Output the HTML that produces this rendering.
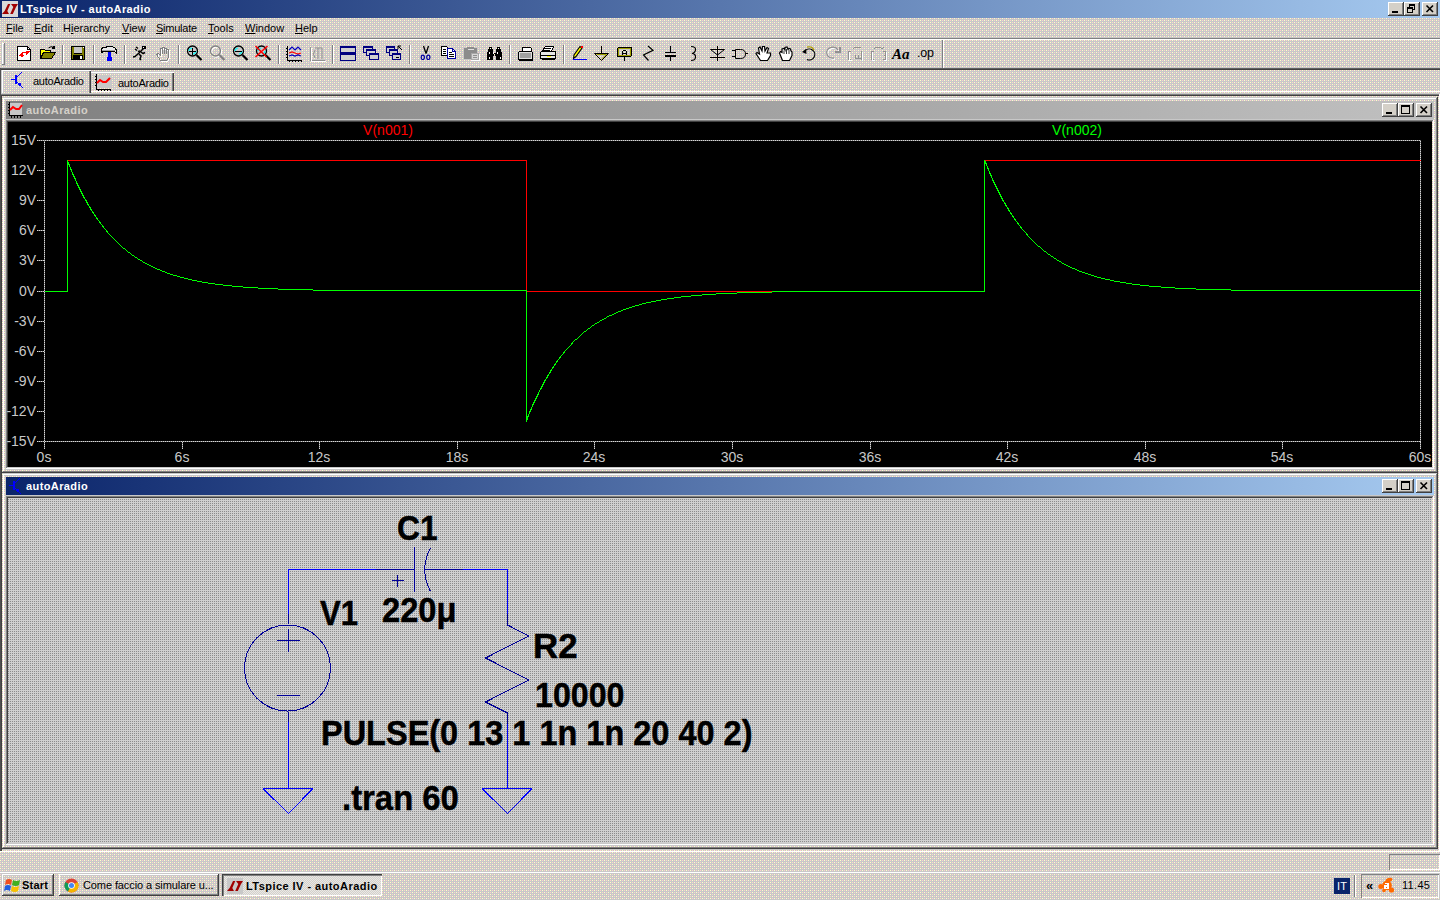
<!DOCTYPE html>
<html><head><meta charset="utf-8">
<style>
*{margin:0;padding:0;box-sizing:border-box}
html,body{width:1440px;height:900px;overflow:hidden;font-family:"Liberation Sans",sans-serif;font-size:11px;color:#000}
body{position:relative;background-color:#d4d0c8;
background-image:conic-gradient(from 270deg at 1px 1px,#ffffc8 25%,transparent 0),conic-gradient(from 270deg at 1px 1px,#ffd0d0 25%,transparent 0),conic-gradient(from 270deg at 1px 1px,#ffd0d0 25%,transparent 0),conic-gradient(from 270deg at 1px 1px,#ffffc8 25%,transparent 0),linear-gradient(#c8c8c8,#c8c8c8);
background-size:4px 4px;background-position:0 0,2px 0,0 2px,2px 2px,0 0}
.a{position:absolute}
.hl{position:absolute;height:1px}
.vl{position:absolute;width:1px}
.raised{box-shadow:inset -1px -1px #404040,inset 1px 1px #fff,inset -2px -2px #808080}
.sunk{box-shadow:inset 1px 1px #808080,inset -1px -1px #fff}
.cap .t{position:absolute;left:20px;top:3px;font-weight:bold;font-size:11px;white-space:nowrap;letter-spacing:0.4px}
.cb{position:absolute;width:16px;height:14px;background:#d4d0c8;box-shadow:inset -1px -1px #404040,inset 1px 1px #fff,inset -2px -2px #808080}
.cb svg{position:absolute;left:0;top:0}
</style></head><body>

<!-- CHROME -->
<!-- title bar -->
<div class="a" style="left:0;top:0;width:1440px;height:18px;background:linear-gradient(90deg,#0a246a,#a6caf0)"></div>
<svg class="a" style="left:2px;top:1px" width="16" height="16" shape-rendering="crispEdges">
<rect x="0" y="0" width="16" height="16" fill="#d8d8d8"/>
<path fill="#a00000" shape-rendering="auto" d="M6,3 H8.3 L5.3,10 L7,13 H0 L2.6,10 Z M9,3 H16 L14,6 L10.8,13 H8.2 L11.3,6 Z"/>
</svg>
<div class="a" style="left:20px;top:3px;color:#fff;font-weight:bold;font-size:11px;white-space:nowrap;letter-spacing:0.42px">LTspice IV - autoAradio</div>
<div class="cb" style="left:1388px;top:2px"><svg width="16" height="14" shape-rendering="crispEdges"><rect x="4" y="9" width="6" height="2" fill="#000"/></svg></div>
<div class="cb" style="left:1404px;top:2px"><svg width="16" height="14" shape-rendering="crispEdges"><path fill="none" stroke="#000" d="M5.5,2.5 h5 v5 h-5 z"/><rect x="5" y="2" width="6" height="2"/><rect x="3" y="5" width="6" height="6" fill="#d4d0c8"/><path fill="none" stroke="#000" d="M3.5,5.5 h5 v5 h-5 z"/><rect x="3" y="5" width="6" height="2"/></svg></div>
<div class="cb" style="left:1422px;top:2px"><svg width="16" height="14"><path stroke="#000" stroke-width="1.6" d="M4.5,3.5 L11,10 M11,3.5 L4.5,10"/></svg></div>

<!-- menu -->
<div class="a" style="left:0;top:18px;width:1440px;height:20px;font-size:11px">
  <div class="a" style="left:6px;top:4px"><u>F</u>ile</div>
  <div class="a" style="left:34px;top:4px"><u>E</u>dit</div>
  <div class="a" style="left:63px;top:4px">H<u>i</u>erarchy</div>
  <div class="a" style="left:122px;top:4px"><u>V</u>iew</div>
  <div class="a" style="left:156px;top:4px;letter-spacing:-0.25px"><u>S</u>imulate</div>
  <div class="a" style="left:208px;top:4px"><u>T</u>ools</div>
  <div class="a" style="left:245px;top:4px"><u>W</u>indow</div>
  <div class="a" style="left:295px;top:4px"><u>H</u>elp</div>
</div>
<div class="hl" style="left:0;top:38px;width:1440px;background:#808080"></div>
<div class="hl" style="left:0;top:39px;width:1440px;background:#fff"></div>

<!-- toolbar band -->
<div class="vl" style="left:2px;top:43px;height:21px;background:#fff"></div>
<div class="vl" style="left:3px;top:43px;height:1px;background:#fff"></div>
<div class="vl" style="left:4px;top:43px;height:21px;background:#808080"></div>
<div class="hl" style="left:2px;top:64px;width:3px;background:#808080"></div>
<div class="vl" style="left:942px;top:40px;height:28px;background:#808080"></div>
<div class="vl" style="left:943px;top:40px;height:28px;background:#fff"></div>
<div class="hl" style="left:0;top:68px;width:1440px;background:#606060"></div><div class="hl" style="left:0;top:69px;width:1440px;background:#404040"></div>

<!-- tab bar -->

<div class="a" style="left:2px;top:70px;width:89px;height:23px;box-shadow:inset 1px 1px #fff,inset -1px 0 #404040,inset -2px 0 #808080"></div>
<div class="a" style="left:91px;top:72px;width:83px;height:20px;box-shadow:inset 0 1px #fff,inset -1px 0 #404040,inset -2px 0 #808080"></div>
<div class="hl" style="left:91px;top:91px;width:1349px;background:#fff"></div>
<svg class="a" style="left:9px;top:72px" width="16" height="16"><g fill="#0000ff"><rect x="6" y="3" width="2" height="9"/><rect x="2" y="7" width="4" height="1"/><rect x="8" y="4" width="1" height="1"/><rect x="9" y="3" width="1" height="1"/><rect x="10" y="2" width="1" height="1"/><rect x="11" y="1" width="1" height="1"/><rect x="12" y="0" width="1" height="1"/><rect x="8" y="10" width="1" height="1"/><rect x="9" y="11" width="1" height="1"/><rect x="10" y="12" width="1" height="1"/><rect x="11" y="13" width="1" height="1"/><rect x="12" y="14" width="1" height="1"/><rect x="13" y="15" width="1" height="1"/><rect x="10" y="11" width="2" height="3"/><rect x="9" y="12" width="3" height="1"/></g></svg>
<div class="a" style="left:33px;top:75px;font-size:11px;letter-spacing:-0.25px">autoAradio</div>
<svg class="a" style="left:95px;top:74px" width="17" height="17" shape-rendering="crispEdges">
<rect x="2" y="1" width="14" height="13" fill="#c8c8c8"/>
<path stroke="#000" fill="none" d="M1.5,0 V15.5 H16 M0,2.5 h1 M0,5.5 h1 M0,8.5 h1 M0,11.5 h1 M3.5,16 v1 M6.5,16 v1 M9.5,16 v1 M12.5,16 v1 M15.5,16 v1"/>
<path stroke="#ff0000" fill="none" stroke-width="2" shape-rendering="auto" d="M2,9 L5,6 L8,8 L11,8 L15,4"/>
</svg>
<div class="a" style="left:118px;top:77px;font-size:11px;letter-spacing:-0.25px">autoAradio</div>

<!-- MDI client edges -->
<div class="hl" style="left:0;top:94px;width:1440px;background:#808080"></div>
<div class="hl" style="left:1px;top:95px;width:1438px;background:#404040"></div>
<div class="vl" style="left:0;top:68px;height:784px;background:#505050"></div>
<div class="vl" style="left:1px;top:95px;height:756px;background:#404040"></div>
<div class="vl" style="left:1439px;top:94px;height:758px;background:#fff"></div>
<div class="hl" style="left:0;top:851px;width:1440px;background:#fff"></div>

<!-- plot window -->
<div class="a" style="left:2px;top:472px;width:1436px;height:1px;background:#404040"></div>
<div class="a" style="left:1437px;top:97px;width:1px;height:376px;background:#404040"></div>
<div class="a" style="left:3px;top:98px;width:1433px;height:1px;background:#fff"></div>
<div class="a" style="left:3px;top:98px;width:1px;height:373px;background:#fff"></div>
<div class="a" style="left:3px;top:471px;width:1434px;height:1px;background:#808080"></div>
<div class="a" style="left:1436px;top:98px;width:1px;height:374px;background:#808080"></div>
<div class="a cap" style="left:6px;top:101px;width:1428px;height:18px;background:linear-gradient(90deg,#808080,#c0c0c0)">
  <div class="t" style="color:#d4d0c8">autoAradio</div>
</div>
<svg class="a" style="left:7px;top:102px" width="16" height="16" shape-rendering="crispEdges">
<rect x="3" y="1" width="12" height="12" fill="#c8c8c8"/>
<path stroke="#000" fill="none" d="M2.5,0 V13.5 H16 M1,2.5 h1 M1,5.5 h1 M1,8.5 h1 M1,11.5 h1 M4.5,14 v2 M7.5,14 v2 M10.5,14 v2 M13.5,14 v2"/>
<path stroke="#ff0000" fill="none" stroke-width="2" shape-rendering="auto" d="M3,8 L6,5 L9,7 L12,7 L15,3"/>
</svg>
<div class="cb" style="left:1382px;top:103px"><svg width="16" height="14" shape-rendering="crispEdges"><rect x="4" y="9" width="6" height="2" fill="#000"/></svg></div>
<div class="cb" style="left:1398px;top:103px"><svg width="16" height="14" shape-rendering="crispEdges"><path fill="none" stroke="#000" d="M3.5,2.5 h8 v8 h-8 z"/><rect x="3" y="3" width="9" height="1"/></svg></div>
<div class="cb" style="left:1416px;top:103px"><svg width="16" height="14"><path stroke="#000" stroke-width="1.6" d="M4.5,3.5 L11,10 M11,3.5 L4.5,10"/></svg></div>
<div class="a" style="left:6px;top:120px;width:1427px;height:1px;background:#808080"></div>
<div class="a" style="left:6px;top:120px;width:1px;height:348px;background:#808080"></div>
<div class="a" style="left:6px;top:468px;width:1428px;height:1px;background:#fff"></div>
<div class="a" style="left:1433px;top:120px;width:1px;height:349px;background:#fff"></div>
<div class="a" style="left:7px;top:121px;width:1425px;height:1px;background:#404040"></div>
<div class="a" style="left:7px;top:121px;width:1px;height:346px;background:#404040"></div>
<div class="a" style="left:8px;top:122px;width:1424px;height:345px;background:#000"></div>

<!-- schematic window -->
<div class="a" style="left:2px;top:848px;width:1436px;height:1px;background:#404040"></div>
<div class="a" style="left:1437px;top:473px;width:1px;height:376px;background:#404040"></div>
<div class="a" style="left:3px;top:474px;width:1433px;height:1px;background:#fff"></div>
<div class="a" style="left:3px;top:474px;width:1px;height:373px;background:#fff"></div>
<div class="a" style="left:3px;top:847px;width:1434px;height:1px;background:#808080"></div>
<div class="a" style="left:1436px;top:474px;width:1px;height:374px;background:#808080"></div>
<div class="a cap" style="left:6px;top:477px;width:1428px;height:18px;background:linear-gradient(90deg,#0a246a,#a6caf0)">
  <div class="t" style="color:#fff">autoAradio</div>
</div>
<svg class="a" style="left:7px;top:478px" width="16" height="16"><g fill="#0000ff"><rect x="6" y="3" width="2" height="9"/><rect x="2" y="7" width="4" height="1"/><rect x="8" y="4" width="1" height="1"/><rect x="9" y="3" width="1" height="1"/><rect x="10" y="2" width="1" height="1"/><rect x="11" y="1" width="1" height="1"/><rect x="12" y="0" width="1" height="1"/><rect x="8" y="10" width="1" height="1"/><rect x="9" y="11" width="1" height="1"/><rect x="10" y="12" width="1" height="1"/><rect x="11" y="13" width="1" height="1"/><rect x="12" y="14" width="1" height="1"/><rect x="13" y="15" width="1" height="1"/><rect x="10" y="11" width="2" height="3"/><rect x="9" y="12" width="3" height="1"/></g></svg>
<div class="cb" style="left:1382px;top:479px"><svg width="16" height="14" shape-rendering="crispEdges"><rect x="4" y="9" width="6" height="2" fill="#000"/></svg></div>
<div class="cb" style="left:1398px;top:479px"><svg width="16" height="14" shape-rendering="crispEdges"><path fill="none" stroke="#000" d="M3.5,2.5 h8 v8 h-8 z"/><rect x="3" y="3" width="9" height="1"/></svg></div>
<div class="cb" style="left:1416px;top:479px"><svg width="16" height="14"><path stroke="#000" stroke-width="1.6" d="M4.5,3.5 L11,10 M11,3.5 L4.5,10"/></svg></div>
<div class="a" style="left:6px;top:496px;width:1427px;height:1px;background:#808080"></div>
<div class="a" style="left:6px;top:496px;width:1px;height:348px;background:#808080"></div>
<div class="a" style="left:6px;top:844px;width:1428px;height:1px;background:#fff"></div>
<div class="a" style="left:1433px;top:496px;width:1px;height:349px;background:#fff"></div>
<div class="a" style="left:7px;top:497px;width:1425px;height:1px;background:#404040"></div>
<div class="a" style="left:7px;top:497px;width:1px;height:346px;background:#404040"></div>
<div class="a" style="left:8px;top:498px;width:1424px;height:345px;background-color:#d0d0d0;background-image:linear-gradient(#d0d0d0 1px,transparent 1px),linear-gradient(90deg,#8c8c8c 1px,#d0d0d0 1px);background-size:2px 2px;background-position:0 0"></div>

<!-- status bar -->
<div class="a" style="left:1389px;top:854px;width:51px;height:16px;box-shadow:inset 1px 1px #808080,inset -1px -1px #fff"></div>
<div class="hl" style="left:0;top:872px;width:1440px;background:#fff"></div>

<!-- /CHROME -->

<!-- TOOLBAR -->
<svg class="a" style="left:0;top:0" width="960" height="70" shape-rendering="crispEdges">
<rect x="62" y="45" width="1" height="19" fill="#808080"/><rect x="63" y="45" width="1" height="19" fill="#fff"/>
<rect x="93" y="45" width="1" height="19" fill="#808080"/><rect x="94" y="45" width="1" height="19" fill="#fff"/>
<rect x="124" y="45" width="1" height="19" fill="#808080"/><rect x="125" y="45" width="1" height="19" fill="#fff"/>
<rect x="178" y="45" width="1" height="19" fill="#808080"/><rect x="179" y="45" width="1" height="19" fill="#fff"/>
<rect x="278" y="45" width="1" height="19" fill="#808080"/><rect x="279" y="45" width="1" height="19" fill="#fff"/>
<rect x="332" y="45" width="1" height="19" fill="#808080"/><rect x="333" y="45" width="1" height="19" fill="#fff"/>
<rect x="409" y="45" width="1" height="19" fill="#808080"/><rect x="410" y="45" width="1" height="19" fill="#fff"/>
<rect x="509" y="45" width="1" height="19" fill="#808080"/><rect x="510" y="45" width="1" height="19" fill="#fff"/>
<rect x="563" y="45" width="1" height="19" fill="#808080"/><rect x="564" y="45" width="1" height="19" fill="#fff"/>
<path d="M17.5,46.5 H27.5 L30.5,49.5 V60.5 H17.5 Z" fill="#fff" stroke="#000"/>
<path d="M27.5,46.5 V49.5 H30.5" fill="none" stroke="#000"/>
<path fill="#f00" d="M19,56 L22,52 L30,51 L27,55 Z M21,57 L23,54 L25,54 L23,57 Z"/><path fill="#fff" d="M23,53 h3 v2 h-3z"/>
<path d="M40.5,49.5 H44.5 L45.5,50.5 H50.5 V52.5 H55.5 L51.5,58.5 H40.5 Z" fill="#ffff00" stroke="#000"/>
<path d="M43.5,52.5 H55.5 L51.5,58.5 H40.5 Z" fill="#808000" stroke="#000"/>
<path d="M48.5,48 Q51,45.5 54,47.5" fill="none" stroke="#000" shape-rendering="auto"/><path d="M53,46 h2 v3 h-3z" fill="#000"/>
<rect x="71" y="46" width="14" height="14" fill="#000"/><rect x="72" y="47" width="12" height="12" fill="#808000"/>
<rect x="74" y="47" width="8" height="6" fill="#c8c8c8"/><rect x="74" y="53" width="8" height="1" fill="#000"/><rect x="73" y="55" width="10" height="5" fill="#000"/><rect x="80" y="56" width="2" height="3" fill="#fff"/><rect x="83" y="47" width="1" height="1" fill="#fff"/>
<path d="M101.5,48.5 L103.5,47.5 H105.5 L107.5,46.5 H112.5 L115.5,48.5 L116.5,50.5 V53.5 L114.5,51.5 H103.5 L101.5,52.5 Z" fill="#e8e8e8" stroke="#000"/>
<rect x="102" y="50" width="13" height="1" fill="#a0a0a0"/>
<rect x="108" y="52" width="3" height="5" fill="#0000ff"/><rect x="107" y="57" width="5" height="4" fill="#0000ff"/>
<g fill="none" stroke="#000" stroke-width="1.5" shape-rendering="auto">
<path d="M133,57 L135,56.5 L139,53 L142,50 L144,48"/><path d="M138,51.5 L140,51 M141,52 L143,53.5 L145,52.5 M139,54 L141,56 L140,59 L141,60"/><path d="M135,49 L137,50.5 M136,47 L138,48.5"/>
</g><rect x="142" y="46" width="4" height="3" fill="#000"/><rect x="143" y="47" width="1" height="1" fill="#fff"/>
<path d="M160.5,60.5 L156.5,54.5 L158.5,53.5 L160.5,55.5 V48.5 H162.5 V47.5 H164.5 V48.5 H166.5 V49.5 H168.5 V57.5 L166.5,60.5 Z" fill="none" stroke="#fff" transform="translate(1,1)"/>
<path d="M160.5,60.5 L156.5,54.5 L158.5,53.5 L160.5,55.5 V48.5 H162.5 V47.5 H164.5 V48.5 H166.5 V49.5 H168.5 V57.5 L166.5,60.5 Z" fill="none" stroke="#808080"/>
<path d="M162.5,49 V54 M164.5,48 V54 M166.5,50 V54" stroke="#808080"/>
<g shape-rendering="auto">
<circle cx="192.5" cy="51" r="5" fill="#c8c8c8" stroke="#000" stroke-width="1.3"/>
<path d="M192.0,48 A3.5,3.5 0 0 0 189.0,51" stroke="#00ffff" stroke-width="1.2" fill="none"/>
<path d="M193.0,54 A3.5,3.5 0 0 0 196.0,51" stroke="#00ffff" stroke-width="1.2" fill="none"/>
<path d="M196.5,55 L201.5,60" stroke="#000" stroke-width="2.2" fill="none"/>
</g>
<rect x="189" y="50.5" width="7" height="1.2" fill="#000"/>
<rect x="191.9" y="47.5" width="1.2" height="7" fill="#000"/>
<g shape-rendering="auto">
<circle cx="216.5" cy="52" r="5" fill="none" stroke="#fff" stroke-width="1.3"/>
<circle cx="215.5" cy="51" r="5" fill="none" stroke="#808080" stroke-width="1.3"/>
<path d="M219.5,55 L224.5,60" stroke="#808080" stroke-width="2.2" fill="none"/>
</g>
<g shape-rendering="auto">
<circle cx="238.5" cy="51" r="5" fill="#c8c8c8" stroke="#000" stroke-width="1.3"/>
<path d="M238.0,48 A3.5,3.5 0 0 0 235.0,51" stroke="#00ffff" stroke-width="1.2" fill="none"/>
<path d="M239.0,54 A3.5,3.5 0 0 0 242.0,51" stroke="#00ffff" stroke-width="1.2" fill="none"/>
<path d="M242.5,55 L247.5,60" stroke="#000" stroke-width="2.2" fill="none"/>
</g>
<rect x="235" y="50.5" width="7" height="1.2" fill="#000"/>
<g shape-rendering="auto">
<circle cx="261.5" cy="51" r="5" fill="#c8c8c8" stroke="#000" stroke-width="1.3"/>
<path d="M261.0,48 A3.5,3.5 0 0 0 258.0,51" stroke="#00ffff" stroke-width="1.2" fill="none"/>
<path d="M262.0,54 A3.5,3.5 0 0 0 265.0,51" stroke="#00ffff" stroke-width="1.2" fill="none"/>
<path d="M265.5,55 L270.5,60" stroke="#000" stroke-width="2.2" fill="none"/>
</g>
<path d="M255.5,46 L266.5,57 M267.5,46 L255.5,57" stroke="#f00" stroke-width="1.5" shape-rendering="auto"/>
<path d="M287.5,46 V60.5 H302 M286,48.5 h1 M286,51.5 h1 M286,54.5 h1 M286,57.5 h1 M289.5,61 v1 M292.5,61 v1 M295.5,61 v1 M298.5,61 v1 M301.5,61 v1" stroke="#000" fill="none"/>
<g shape-rendering="auto" fill="none" stroke-width="1.2"><path d="M289,50 L292,47 L295,50 L298,47 L301,50" stroke="#0000c0"/><path d="M289,53 L292,52 L295,53 L298,54 L301,53" stroke="#f00"/><path d="M289,56 L292,55 L295,56 L298,55 L301,56" stroke="#0000c0"/></g>
<g stroke="#909090" fill="none"><path d="M310.5,47 V60.5 H325"/><path d="M315,50 Q312,54 315,58 M318,48 V59 M322,48 V59 M315,48 H322" shape-rendering="auto"/></g>
<g stroke="#fff" fill="none" transform="translate(1,1)"><path d="M310.5,47 V60.5 H325"/></g>
<rect x="340.5" y="46.5" width="15" height="6" fill="#d0d0d0" stroke="#000080"/><rect x="340" y="46" width="16" height="2" fill="#000080"/>
<rect x="340.5" y="53.5" width="15" height="7" fill="#d0d0d0" stroke="#000080"/><rect x="340" y="53" width="16" height="2" fill="#000080"/>
<rect x="363.5" y="46.5" width="9" height="6" fill="#d0d0d0" stroke="#000080"/><rect x="363" y="46" width="10" height="2" fill="#000080"/>
<rect x="366.5" y="49.5" width="9" height="6" fill="#d0d0d0" stroke="#000080"/><rect x="366" y="49" width="10" height="2" fill="#000080"/>
<rect x="369.5" y="53.5" width="9" height="6" fill="#d0d0d0" stroke="#000080"/><rect x="369" y="53" width="10" height="2" fill="#000080"/>
<rect x="386.5" y="46.5" width="8" height="6" fill="#d0d0d0" stroke="#000080"/><rect x="386" y="46" width="9" height="2" fill="#000080"/>
<rect x="389.5" y="49.5" width="8" height="6" fill="#d0d0d0" stroke="#000080"/><rect x="389" y="49" width="9" height="2" fill="#000080"/>
<rect x="392.5" y="53.5" width="8" height="6" fill="#d0d0d0" stroke="#000080"/><rect x="392" y="53" width="9" height="2" fill="#000080"/>
<path d="M396,57.5 h3" stroke="#000"/><path d="M398,46 h3 M398,46 v3 M398,46 L402,50" stroke="#000" shape-rendering="auto"/>
<g shape-rendering="auto" fill="none"><path d="M423.5,46 L426,53.5 M428.5,46 L426,53.5" stroke="#000" stroke-width="1.3"/><ellipse cx="422.8" cy="57.3" rx="1.6" ry="2.2" stroke="#0000a0" stroke-width="1.2"/><ellipse cx="428.3" cy="57.3" rx="1.6" ry="2.2" stroke="#0000a0" stroke-width="1.2"/></g>
<path d="M441.5,46.5 H446.5 L448.5,48.5 V55.5 H441.5 Z" fill="#fff" stroke="#000"/><path d="M443,49.5 h3 M443,51.5 h3 M443,53.5 h3" stroke="#000"/>
<path d="M447.5,48.5 H452.5 L455.5,51.5 V58.5 H447.5 Z" fill="#fff" stroke="#0000a0"/><path d="M449,52.5 h3 M449,54.5 h5 M449,56.5 h5" stroke="#000"/><path d="M452.5,48.5 V51.5 H455.5" fill="none" stroke="#0000a0"/>
<path d="M464,48 h3 v-1 h7 v1 h3 v11 h-13z" fill="#8c8c8c"/><rect x="468" y="49" width="6" height="1" fill="#e0e0e0"/><rect x="471" y="54" width="9" height="7" fill="#fff"/><rect x="471" y="53" width="8" height="7" fill="#a8a8a8"/><rect x="472" y="54" width="6" height="5" fill="#d8d8d8"/><path d="M473,55.5 h4 M473,57.5 h4" stroke="#909090"/>
<path fill="#000" d="M489,47 h3 v2 h1 v4 h3 v-4 h1 v-2 h3 v2 h1 v3 h1 v8 h-6 v-4 h-1 v-2 h-1 v2 h-1 v4 h-6 v-8 h1 v-3 h1z"/><path fill="#fff" d="M490,48 h1 v1 h-1z M498,48 h1 v1 h-1z M489,52 h1 v2 h-1z M493,52 h1 v2 h-1z M497,52 h1 v2 h-1z M489,57 h1 v2 h-1z M500,57 h1 v2 h-1z"/>
<path d="M522.5,47.5 H530.5 L531.5,48.5 V51 H522.5 Z" fill="#fff" stroke="#000"/><path d="M519.5,51.5 H531.5 L532.5,52.5 V59.5 H518.5 V52.5 Z" fill="#e0e0e0" stroke="#000"/><rect x="520" y="53" width="11" height="5" fill="#a0a0a0"/><rect x="519" y="60" width="14" height="1" fill="#000"/>
<path d="M544.5,47.5 L545.5,46.5 H553.5 L551.5,51.5 H542.5 Z" fill="#fff" stroke="#000"/><path d="M545,48.5 h6 M544,50.5 h6" stroke="#000"/><path d="M541.5,51.5 H555.5 V58.5 H540.5 V52.5 Z" fill="#e8e8e8" stroke="#000"/><rect x="541" y="55" width="14" height="1" fill="#000"/><rect x="547" y="56" width="4" height="1" fill="#ffff00"/><rect x="542" y="59" width="13" height="1" fill="#000"/>
<path d="M573.5,58.5 L574,55 L580,46.5 L582,48 L576,56.5 Z" fill="#ffff00" stroke="#000" stroke-width="1.1" shape-rendering="auto"/><rect x="581" y="46" width="1.5" height="2" fill="#f00"/><rect x="573" y="59" width="14" height="1" fill="#0000ff"/>
<path d="M601.5,46 V53" stroke="#000"/><path d="M594.5,53.5 H608.5 L601.5,60.5 Z" fill="none" stroke="#000" shape-rendering="auto"/><path d="M596.5,54.5 H606.5 L601.5,59" fill="none" stroke="#a0a000" shape-rendering="auto"/>
<rect x="617.5" y="47.5" width="14" height="9" rx="1.5" fill="none" stroke="#000"/><rect x="618.5" y="48.5" width="12" height="7" fill="none" stroke="#a0a000"/><path d="M624.5,57 V61" stroke="#000"/><path d="M622.5,55 V51.5 L623.5,50.5 H625.5 L626.5,51.5 V55 M622.5,53.5 H626.5" fill="none" stroke="#000"/>
<path d="M648,46 L653,50.3 L643.5,55 L648.5,60.5" fill="none" stroke="#000" stroke-width="1.2" shape-rendering="auto"/>
<path d="M670.5,46 V52 M670.5,56 V61" stroke="#000"/><rect x="665" y="51.5" width="11" height="1.5" fill="#000"/><rect x="665" y="55" width="11" height="1.5" fill="#000"/>
<path d="M691,46.5 Q696,46.5 695.5,50 Q695,53 692,53.5 Q696,54 695.5,57.5 Q695,60.5 691,60.5" fill="none" stroke="#000" stroke-width="1.2" shape-rendering="auto"/>
<path d="M717.5,46 V61 M710,57.5 H725" stroke="#000"/><path d="M710.5,49.5 H724.5 L717.5,55 Z" fill="none" stroke="#000" shape-rendering="auto"/>
<path d="M735.5,49.5 H740.5 Q745.5,49.5 745.5,54 Q745.5,58.5 740.5,58.5 H735.5 Z" fill="none" stroke="#000" shape-rendering="auto"/><path d="M732,50.5 h3 M732,56.5 h3 M746,53.5 h2" stroke="#000"/>
<path d="M760.5,60.5 L756,53.5 L757,52.5 L759.5,54 L758.5,48 L760,47 L762,51 L762.5,46.5 L764.5,46.5 L765,51 L767,47.5 L768.5,48.5 L767,53 L770.5,53 V55.5 L767.5,60.5 Z" fill="#fff" stroke="#000" stroke-width="1.2" shape-rendering="auto"/>
<path d="M782.5,60.5 L779.5,53 L780.5,51.5 L782,52.5 V49 L784,48.5 L785,50 V47.5 L787,47 L788,49.5 L789,48.5 L790.5,49 L791,51 L792,52 V55.5 L789.5,60.5 Z" fill="#fff" stroke="#000" stroke-width="1.2" shape-rendering="auto"/><path d="M784,50.5 V54 M786.5,49 V54 M789,50 V54" stroke="#000" stroke-width="0.8" shape-rendering="auto"/>
<path d="M805,51 A5.5,5.5 0 1 1 807,59.5" fill="none" stroke="#000" stroke-width="1.2" shape-rendering="auto"/><path d="M807,47.2 A5.5,5.5 0 0 1 814,50" fill="none" stroke="#b0a000" stroke-width="1.3" shape-rendering="auto"/><path d="M802,52 L806,49 L806.5,54 Z" fill="#000" shape-rendering="auto"/>
<path d="M838,50 A6,5.5 0 1 0 834,58" fill="none" stroke="#fff" stroke-width="1.3" shape-rendering="auto" transform="translate(1,1)"/><path d="M838,50 A6,5.5 0 1 0 834,58" fill="none" stroke="#909090" stroke-width="1.3" shape-rendering="auto"/><path d="M840,47 v5 h-5" fill="none" stroke="#909090" stroke-width="1.3"/>
<g stroke="#909090" fill="none"><path d="M848.5,51 V59.5 H851 M848.5,54.5 H850 M848.5,51.5 H851 M861.5,51 V59.5 M855,54.5 V58.5 H861 M858,54.5 V58 M853,49 Q856,46 859,48 L861,47"/>
<path d="M871.5,51 V59.5 H874 M871.5,51.5 H874 M871.5,55.5 H873 M885.5,51 V59.5 H883 M885.5,51.5 H883 M885.5,55.5 H884 M874,49 Q878,45 882,49 L884,47"/></g>
<g stroke="#fff" fill="none" transform="translate(1,1)"><path d="M848.5,51 V59.5 H851 M861.5,51 V59.5 M871.5,51 V59.5 H874 M885.5,51 V59.5 H883"/></g>
<text x="892" y="59" font-family="Liberation Serif" font-style="italic" font-weight="bold" font-size="15" fill="#000">Aa</text>
<text x="917" y="57" font-family="Liberation Sans" font-size="12.5" fill="#000" letter-spacing="-0.2">.op</text>
</svg>
<!-- /TOOLBAR -->

<!-- PLOTSVG -->
<svg class="a" style="left:0;top:0" width="1440" height="900" shape-rendering="crispEdges">
<g stroke="#707070" stroke-width="1" fill="none">
<path d="M44.5,140.5 H1420.5 V441.5 H44.5 Z"/>
<path d="M37,140.5 H44"/>
<path d="M37,170.5 H44"/>
<path d="M37,200.5 H44"/>
<path d="M37,230.5 H44"/>
<path d="M37,260.5 H44"/>
<path d="M37,291.5 H44"/>
<path d="M37,321.5 H44"/>
<path d="M37,351.5 H44"/>
<path d="M37,381.5 H44"/>
<path d="M37,411.5 H44"/>
<path d="M37,441.5 H44"/>
<path d="M44.5,442 V449"/>
<path d="M182.5,442 V449"/>
<path d="M319.5,442 V449"/>
<path d="M457.5,442 V449"/>
<path d="M594.5,442 V449"/>
<path d="M732.5,442 V449"/>
<path d="M870.5,442 V449"/>
<path d="M1007.5,442 V449"/>
<path d="M1145.5,442 V449"/>
<path d="M1282.5,442 V449"/>
<path d="M1420.5,442 V449"/>
</g>
<g stroke="#d8d8d8" stroke-width="1" fill="none" stroke-dasharray="1 1">
<path d="M44.5,140.5 H1420.5 V441.5 H44.5 Z"/>
<path d="M37,140.5 H44"/>
<path d="M37,170.5 H44"/>
<path d="M37,200.5 H44"/>
<path d="M37,230.5 H44"/>
<path d="M37,260.5 H44"/>
<path d="M37,291.5 H44"/>
<path d="M37,321.5 H44"/>
<path d="M37,351.5 H44"/>
<path d="M37,381.5 H44"/>
<path d="M37,411.5 H44"/>
<path d="M37,441.5 H44"/>
<path d="M44.5,442 V449"/>
<path d="M182.5,442 V449"/>
<path d="M319.5,442 V449"/>
<path d="M457.5,442 V449"/>
<path d="M594.5,442 V449"/>
<path d="M732.5,442 V449"/>
<path d="M870.5,442 V449"/>
<path d="M1007.5,442 V449"/>
<path d="M1145.5,442 V449"/>
<path d="M1282.5,442 V449"/>
<path d="M1420.5,442 V449"/>
</g>
<g fill="#c8c8c8" font-size="14" font-family="Liberation Sans">
<text x="36" y="145" text-anchor="end">15V</text>
<text x="36" y="175" text-anchor="end">12V</text>
<text x="36" y="205" text-anchor="end">9V</text>
<text x="36" y="235" text-anchor="end">6V</text>
<text x="36" y="265" text-anchor="end">3V</text>
<text x="36" y="296" text-anchor="end">0V</text>
<text x="36" y="326" text-anchor="end">-3V</text>
<text x="36" y="356" text-anchor="end">-6V</text>
<text x="36" y="386" text-anchor="end">-9V</text>
<text x="36" y="416" text-anchor="end">-12V</text>
<text x="36" y="446" text-anchor="end">-15V</text>
<text x="44" y="462" text-anchor="middle">0s</text>
<text x="182" y="462" text-anchor="middle">6s</text>
<text x="319" y="462" text-anchor="middle">12s</text>
<text x="457" y="462" text-anchor="middle">18s</text>
<text x="594" y="462" text-anchor="middle">24s</text>
<text x="732" y="462" text-anchor="middle">30s</text>
<text x="870" y="462" text-anchor="middle">36s</text>
<text x="1007" y="462" text-anchor="middle">42s</text>
<text x="1145" y="462" text-anchor="middle">48s</text>
<text x="1282" y="462" text-anchor="middle">54s</text>
<text x="1420" y="462" text-anchor="middle">60s</text>
</g>
<text x="388" y="135" fill="#ff0000" font-size="14" text-anchor="middle" font-family="Liberation Sans">V(n001)</text>
<text x="1077" y="135" fill="#00ff00" font-size="14" text-anchor="middle" font-family="Liberation Sans">V(n002)</text>
<path d="M44.5,291.5 H67.5 V160.5 H526.5 V291.5 H984.5 V160.5 H1420.5" stroke="#ff0000" fill="none" stroke-width="1"/>
<path d="M44.5,291.5 67.5,291.5 67.5,160.5 68.5,163.5 69.5,165.5 70.5,168.5 71.5,170.5 72.5,173.5 75.5,179.5 76.5,182.5 84.5,198.5 85.5,199.5 88.5,205.5 89.5,206.5 91.5,210.5 92.5,211.5 93.5,213.5 94.5,214.5 95.5,216.5 96.5,217.5 97.5,219.5 99.5,221.5 100.5,223.5 102.5,225.5 103.5,227.5 106.5,230.5 107.5,232.5 123.5,248.5 124.5,248.5 128.5,252.5 129.5,252.5 132.5,255.5 133.5,255.5 135.5,257.5 136.5,257.5 138.5,259.5 139.5,259.5 140.5,260.5 141.5,260.5 143.5,262.5 144.5,262.5 145.5,263.5 146.5,263.5 147.5,264.5 148.5,264.5 149.5,265.5 150.5,265.5 151.5,266.5 152.5,266.5 153.5,267.5 154.5,267.5 155.5,268.5 156.5,268.5 157.5,269.5 159.5,269.5 160.5,270.5 161.5,270.5 162.5,271.5 164.5,271.5 165.5,272.5 166.5,272.5 167.5,273.5 169.5,273.5 170.5,274.5 172.5,274.5 173.5,275.5 176.5,275.5 177.5,276.5 179.5,276.5 180.5,277.5 183.5,277.5 184.5,278.5 187.5,278.5 188.5,279.5 191.5,279.5 192.5,280.5 196.5,280.5 197.5,281.5 201.5,281.5 202.5,282.5 207.5,282.5 208.5,283.5 214.5,283.5 215.5,284.5 222.5,284.5 223.5,285.5 231.5,285.5 232.5,286.5 242.5,286.5 243.5,287.5 257.5,287.5 258.5,288.5 277.5,288.5 278.5,289.5 312.5,289.5 313.5,290.5 526.5,290.5 526.5,421.5 527.5,417.5 528.5,415.5 529.5,412.5 531.5,408.5 532.5,405.5 538.5,393.5 539.5,390.5 540.5,389.5 545.5,379.5 546.5,378.5 548.5,374.5 549.5,373.5 551.5,369.5 552.5,368.5 553.5,366.5 554.5,365.5 555.5,363.5 556.5,362.5 557.5,360.5 559.5,358.5 560.5,356.5 563.5,353.5 564.5,351.5 571.5,344.5 572.5,342.5 575.5,339.5 576.5,339.5 584.5,331.5 585.5,331.5 588.5,328.5 589.5,328.5 592.5,325.5 593.5,325.5 595.5,323.5 596.5,323.5 597.5,322.5 598.5,322.5 600.5,320.5 601.5,320.5 602.5,319.5 603.5,319.5 604.5,318.5 605.5,318.5 607.5,316.5 608.5,316.5 609.5,315.5 611.5,315.5 612.5,314.5 613.5,314.5 614.5,313.5 615.5,313.5 616.5,312.5 617.5,312.5 618.5,311.5 620.5,311.5 621.5,310.5 622.5,310.5 623.5,309.5 625.5,309.5 626.5,308.5 628.5,308.5 629.5,307.5 631.5,307.5 632.5,306.5 634.5,306.5 635.5,305.5 638.5,305.5 639.5,304.5 641.5,304.5 642.5,303.5 645.5,303.5 646.5,302.5 650.5,302.5 651.5,301.5 655.5,301.5 656.5,300.5 660.5,300.5 661.5,299.5 666.5,299.5 667.5,298.5 673.5,298.5 674.5,297.5 680.5,297.5 681.5,296.5 690.5,296.5 691.5,295.5 701.5,295.5 702.5,294.5 715.5,294.5 716.5,293.5 736.5,293.5 737.5,292.5 771.5,292.5 772.5,291.5 984.5,291.5 984.5,160.5 986.5,164.5 987.5,167.5 988.5,169.5 989.5,172.5 991.5,176.5 992.5,179.5 1003.5,201.5 1004.5,202.5 1006.5,206.5 1007.5,207.5 1009.5,211.5 1010.5,212.5 1011.5,214.5 1012.5,215.5 1013.5,217.5 1014.5,218.5 1015.5,220.5 1017.5,222.5 1018.5,224.5 1020.5,226.5 1021.5,228.5 1026.5,233.5 1027.5,235.5 1038.5,246.5 1039.5,246.5 1044.5,251.5 1045.5,251.5 1048.5,254.5 1049.5,254.5 1051.5,256.5 1052.5,256.5 1054.5,258.5 1055.5,258.5 1057.5,260.5 1058.5,260.5 1059.5,261.5 1060.5,261.5 1062.5,263.5 1063.5,263.5 1064.5,264.5 1065.5,264.5 1066.5,265.5 1067.5,265.5 1068.5,266.5 1069.5,266.5 1070.5,267.5 1071.5,267.5 1072.5,268.5 1074.5,268.5 1075.5,269.5 1076.5,269.5 1077.5,270.5 1078.5,270.5 1079.5,271.5 1081.5,271.5 1082.5,272.5 1084.5,272.5 1085.5,273.5 1087.5,273.5 1088.5,274.5 1090.5,274.5 1091.5,275.5 1093.5,275.5 1094.5,276.5 1096.5,276.5 1097.5,277.5 1100.5,277.5 1101.5,278.5 1104.5,278.5 1105.5,279.5 1109.5,279.5 1110.5,280.5 1113.5,280.5 1114.5,281.5 1119.5,281.5 1120.5,282.5 1125.5,282.5 1126.5,283.5 1131.5,283.5 1132.5,284.5 1139.5,284.5 1140.5,285.5 1148.5,285.5 1149.5,286.5 1160.5,286.5 1161.5,287.5 1174.5,287.5 1175.5,288.5 1195.5,288.5 1196.5,289.5 1230.5,289.5 1231.5,290.5 1420.5,290.5" stroke="#00ff00" fill="none" stroke-width="1"/>
</svg>
<!-- /PLOTSVG -->

<!-- SCHSVG -->
<svg class="a" style="left:0;top:0" width="1440" height="900">
<g fill="none" stroke-width="1" shape-rendering="crispEdges">
<path stroke="#0000ff" d="M288.5,614 V569.5 H376 M463,569.5 H507.5 V614 M507.5,724 V788.5 M288.5,722 V788.5 M263,788.5 H313 M482,788.5 H532"/>
<path stroke="#000099" d="M288.5,614 V624 M288.5,712 V722 M376,569.5 H414.5 M414.5,547 V592 M425,569.5 H463 M392,580.5 H404 M397.5,575 V587 M277,640.5 H300 M288.5,629 V652 M277,695.5 H300 M507.5,614 V625"/>
</g>
<g fill="none" stroke-width="1" shape-rendering="crispEdges">
<circle stroke="#000099" cx="287.5" cy="668" r="43"/>
<path stroke="#000099" d="M430.5,548 Q419,569.5 430.5,591.5"/>
<path stroke="#000099" d="M507.5,625 L529,636 L485.5,658 L529,680 L485.5,702 L507.5,713 V724"/>
<path stroke="#0000ff" d="M263,788.5 L288.5,813.5 L313,788.5 M482,788.5 L507.5,813.5 L532,788.5"/>
</g>
<g font-family="Liberation Sans" font-weight="bold" font-size="35" fill="#000" stroke="#000" stroke-width="0.5">
<text x="397" y="540" textLength="40.5" lengthAdjust="spacingAndGlyphs">C1</text>
<text x="382" y="622" textLength="74.4" lengthAdjust="spacingAndGlyphs">220μ</text>
<text x="320" y="625" textLength="38.0" lengthAdjust="spacingAndGlyphs">V1</text>
<text x="533" y="658" textLength="44.5" lengthAdjust="spacingAndGlyphs">R2</text>
<text x="535" y="707" textLength="89.4" lengthAdjust="spacingAndGlyphs">10000</text>
<text x="321" y="745" textLength="431.5" lengthAdjust="spacingAndGlyphs">PULSE(0 13 1 1n 1n 20 40 2)</text>
<text x="342" y="810" textLength="116.9" lengthAdjust="spacingAndGlyphs">.tran 60</text>
</g>
</svg>

<!-- /SCHSVG -->

<!-- TASKBAR -->
<!-- Start button -->
<div class="a raised" style="left:2px;top:874px;width:52px;height:22px"></div>
<svg class="a" style="left:4px;top:877px" width="17" height="16" shape-rendering="auto">
<path d="M2,3 Q5,1 8,3 L7,8 Q4,6 1,8 Z" fill="#f05020"/>
<path d="M9,3 Q12,5 16,3 L15,8 Q12,10 8,8 Z" fill="#40b020"/>
<path d="M1,9 Q4,7 7,9 L6,14 Q3,12 0,14 Z" fill="#2060e0"/>
<path d="M8,9 Q11,11 15,9 L14,14 Q11,16 7,14 Z" fill="#f8c000"/>
</svg>
<div class="a" style="left:22px;top:879px;font-weight:bold;font-size:11px;letter-spacing:0.2px">Start</div>
<!-- Chrome task -->
<div class="a raised" style="left:59px;top:874px;width:160px;height:22px"></div>
<svg class="a" style="left:64px;top:878px" width="15" height="15" shape-rendering="auto">
<circle cx="7.5" cy="7.5" r="7" fill="#db4437"/>
<path d="M7.5,7.5 L1.4,4 A7,7 0 0 0 4,13.6 Z" fill="#0f9d58"/>
<path d="M7.5,7.5 L4,13.6 A7,7 0 0 0 14.5,7.5 L13.6,4 Z" fill="#f4b400"/>
<circle cx="7.5" cy="7.5" r="3.3" fill="#fff"/><circle cx="7.5" cy="7.5" r="2.5" fill="#4285f4"/>
</svg>
<div class="a" style="left:83px;top:879px;font-size:11px;white-space:nowrap;letter-spacing:-0.1px">Come faccio a simulare u...</div>
<!-- LTspice task (pressed) -->
<div class="a" style="left:222px;top:874px;width:160px;height:22px;box-shadow:inset 1px 1px #404040,inset 2px 2px #808080,inset -1px -1px #fff;background-color:#e8e8e8;background-image:linear-gradient(45deg,#d4d0c8 25%,transparent 25%,transparent 75%,#d4d0c8 75%),linear-gradient(45deg,#d4d0c8 25%,transparent 25%,transparent 75%,#d4d0c8 75%);background-size:2px 2px;background-position:0 0,1px 1px;background-clip:content-box;padding:2px 1px 1px 2px"></div>
<svg class="a" style="left:227px;top:878px" width="17" height="16" shape-rendering="crispEdges">
<rect x="0" y="0" width="16" height="16" fill="#c8c8c8"/>
<path fill="#a00000" shape-rendering="auto" d="M6,3 H8.3 L5.3,10 L7,13 H0 L2.6,10 Z M9,3 H16 L14,6 L10.8,13 H8.2 L11.3,6 Z"/>
</svg>
<div class="a" style="left:246px;top:880px;font-weight:bold;font-size:11px;white-space:nowrap;letter-spacing:0.45px">LTspice IV - autoAradio</div>
<!-- tray -->
<div class="a" style="left:1334px;top:878px;width:16px;height:16px;background:#0a246a;color:#fff;font-size:11px;text-align:center;line-height:16px">IT</div>
<div class="vl" style="left:1354px;top:875px;height:22px;background:#808080"></div>
<div class="vl" style="left:1355px;top:875px;height:22px;background:#fff"></div>
<div class="a" style="left:1361px;top:874px;width:78px;height:24px;box-shadow:inset 1px 1px #808080,inset -1px -1px #fff"></div>
<div class="a" style="left:1366px;top:878px;font-size:13px;font-weight:bold">«</div>
<svg class="a" style="left:1378px;top:877px" width="17" height="17" shape-rendering="auto">
<g fill="#ff6a00"><circle cx="9" cy="8.5" r="4.8"/><ellipse cx="11" cy="3" rx="3.5" ry="2" transform="rotate(-20 11 3)"/><circle cx="13.5" cy="13" r="2.6"/><circle cx="2.8" cy="9.5" r="2.5"/><circle cx="6" cy="13.5" r="1.8"/></g>
<path d="M7,6.5 h3 v5 h-3 v-2.5 h3" fill="none" stroke="#fff" stroke-width="1.2" shape-rendering="crispEdges"/>
</svg>
<div class="a" style="left:1402px;top:879px;font-size:11px;letter-spacing:0.3px">11.45</div>

<!-- /TASKBAR -->

</body></html>
